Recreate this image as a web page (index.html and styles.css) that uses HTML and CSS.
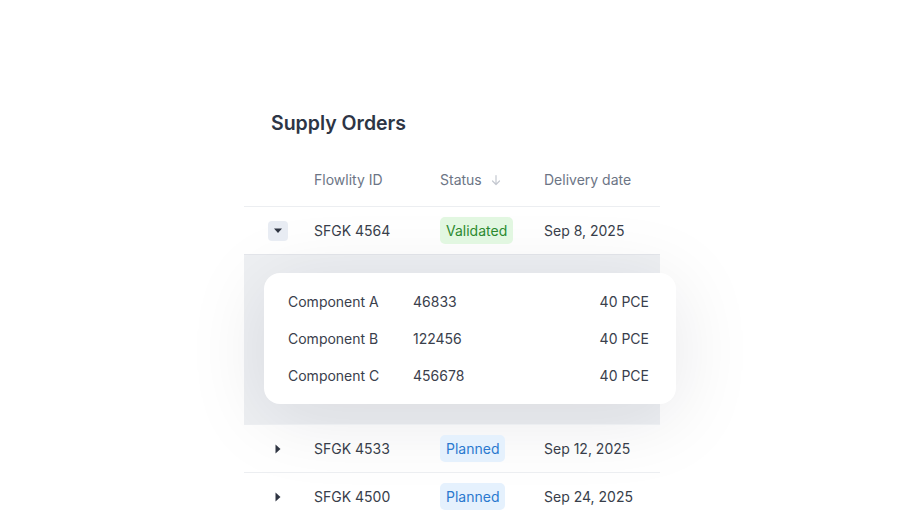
FILE: index.html
```html
<!DOCTYPE html>
<html lang="en">
<head>
  <meta charset="UTF-8" />
  <title>Supply Orders</title>
  <link rel="stylesheet" href="styles.css">
</head>
<body>
  <div class="orders">
    <h1 class="title">Supply Orders</h1>

    <div class="row head">
      <div class="cell"></div>
      <div class="cell">Flowlity ID</div>
      <div class="cell">Status
        <svg class="sort" width="12" height="12" viewBox="0 0 12 12">
          <path d="M6 1.5v9M2.5 7l3.5 3.5L9.5 7" fill="none" stroke="currentColor" stroke-width="1.2" stroke-linecap="round" stroke-linejoin="round"/>
        </svg>
      </div>
      <div class="cell">Delivery date</div>
    </div>

    <div class="row open">
      <div class="cell">
        <span class="toggle active">
          <svg width="10" height="6" viewBox="0 0 10 6"><path d="M1 0.5h8L5 5z" fill="currentColor"/></svg>
        </span>
      </div>
      <div class="cell">SFGK 4564</div>
      <div class="cell"><span class="badge green">Validated</span></div>
      <div class="cell">Sep 8, 2025</div>
    </div>

    <div class="details">
      <div class="card">
        <div class="line"><span>Component A</span><span>46833</span><span class="qty">40 PCE</span></div>
        <div class="line"><span>Component B</span><span>122456</span><span class="qty">40 PCE</span></div>
        <div class="line"><span>Component C</span><span>456678</span><span class="qty">40 PCE</span></div>
      </div>
    </div>

    <div class="row">
      <div class="cell">
        <span class="toggle">
          <svg width="6" height="10" viewBox="0 0 6 10"><path d="M0.5 0.5v9L5.5 5z" fill="currentColor"/></svg>
        </span>
      </div>
      <div class="cell">SFGK 4533</div>
      <div class="cell"><span class="badge blue">Planned</span></div>
      <div class="cell">Sep 12, 2025</div>
    </div>

    <div class="row">
      <div class="cell">
        <span class="toggle">
          <svg width="6" height="10" viewBox="0 0 6 10"><path d="M0.5 0.5v9L5.5 5z" fill="currentColor"/></svg>
        </span>
      </div>
      <div class="cell">SFGK 4500</div>
      <div class="cell"><span class="badge blue">Planned</span></div>
      <div class="cell">Sep 24, 2025</div>
    </div>
  </div>
</body>
</html>
```

FILE: styles.css
```css
body {
  font-family: 'Inter', sans-serif;
  margin: 0;
  padding: 0;
  background: #ffffff;
  color: #2f3542;
  height: 510px;
  overflow: hidden;
}

.orders {
  width: 416px;
  margin-left: 244px;
  padding-top: 109px;
}

.title {
  margin: 0 0 18px 27px;
  font-size: 19.5px;
  line-height: 28px;
  font-weight: 600;
  color: #2d3545;
}

.row {
  display: grid;
  grid-template-columns: 70px 126px 104px 116px;
  align-items: center;
  height: 48px;
  box-sizing: border-box;
  border-top: 1px solid #eceef1;
  font-size: 14px;
  line-height: 20px;
  color: #383e4a;
}

.row.head {
  height: 52px;
  border-top: none;
  border-bottom: 1px solid #eceef1;
  padding-bottom: 1px;
  color: #6c7585;
}

.row.open {
  border-top: none;
  border-bottom: 1px solid #e4e6eb;
}

.cell {
  display: flex;
  align-items: center;
}

.sort {
  margin-left: 8px;
  color: #c4c8d0;
}

.toggle {
  width: 20px;
  height: 20px;
  margin-left: 24px;
  display: flex;
  align-items: center;
  justify-content: center;
  border-radius: 4px;
  color: #2f3542;
}

.toggle.active {
  background: #e8ecf3;
}

.badge {
  padding: 3px 6px;
  border-radius: 5px;
  line-height: 21px;
}

.badge.green {
  background: #e2f7e1;
  color: #2c8a30;
}

.badge.blue {
  background: #e5f1fd;
  color: #2a79cf;
}

.details {
  background: #eef0f3;
  padding: 18px 0 20px 20px;
}

.card {
  width: 412px;
  box-sizing: border-box;
  background: #ffffff;
  border-radius: 16px;
  padding: 10px 27px 10px 24px;
  box-shadow: 0 12px 80px rgba(20, 24, 40, 0.1);
}

.line {
  display: grid;
  grid-template-columns: 125px 1fr auto;
  height: 37px;
  align-items: center;
  font-size: 14px;
  color: #3a404c;
}

.qty {
  text-align: right;
}
```
